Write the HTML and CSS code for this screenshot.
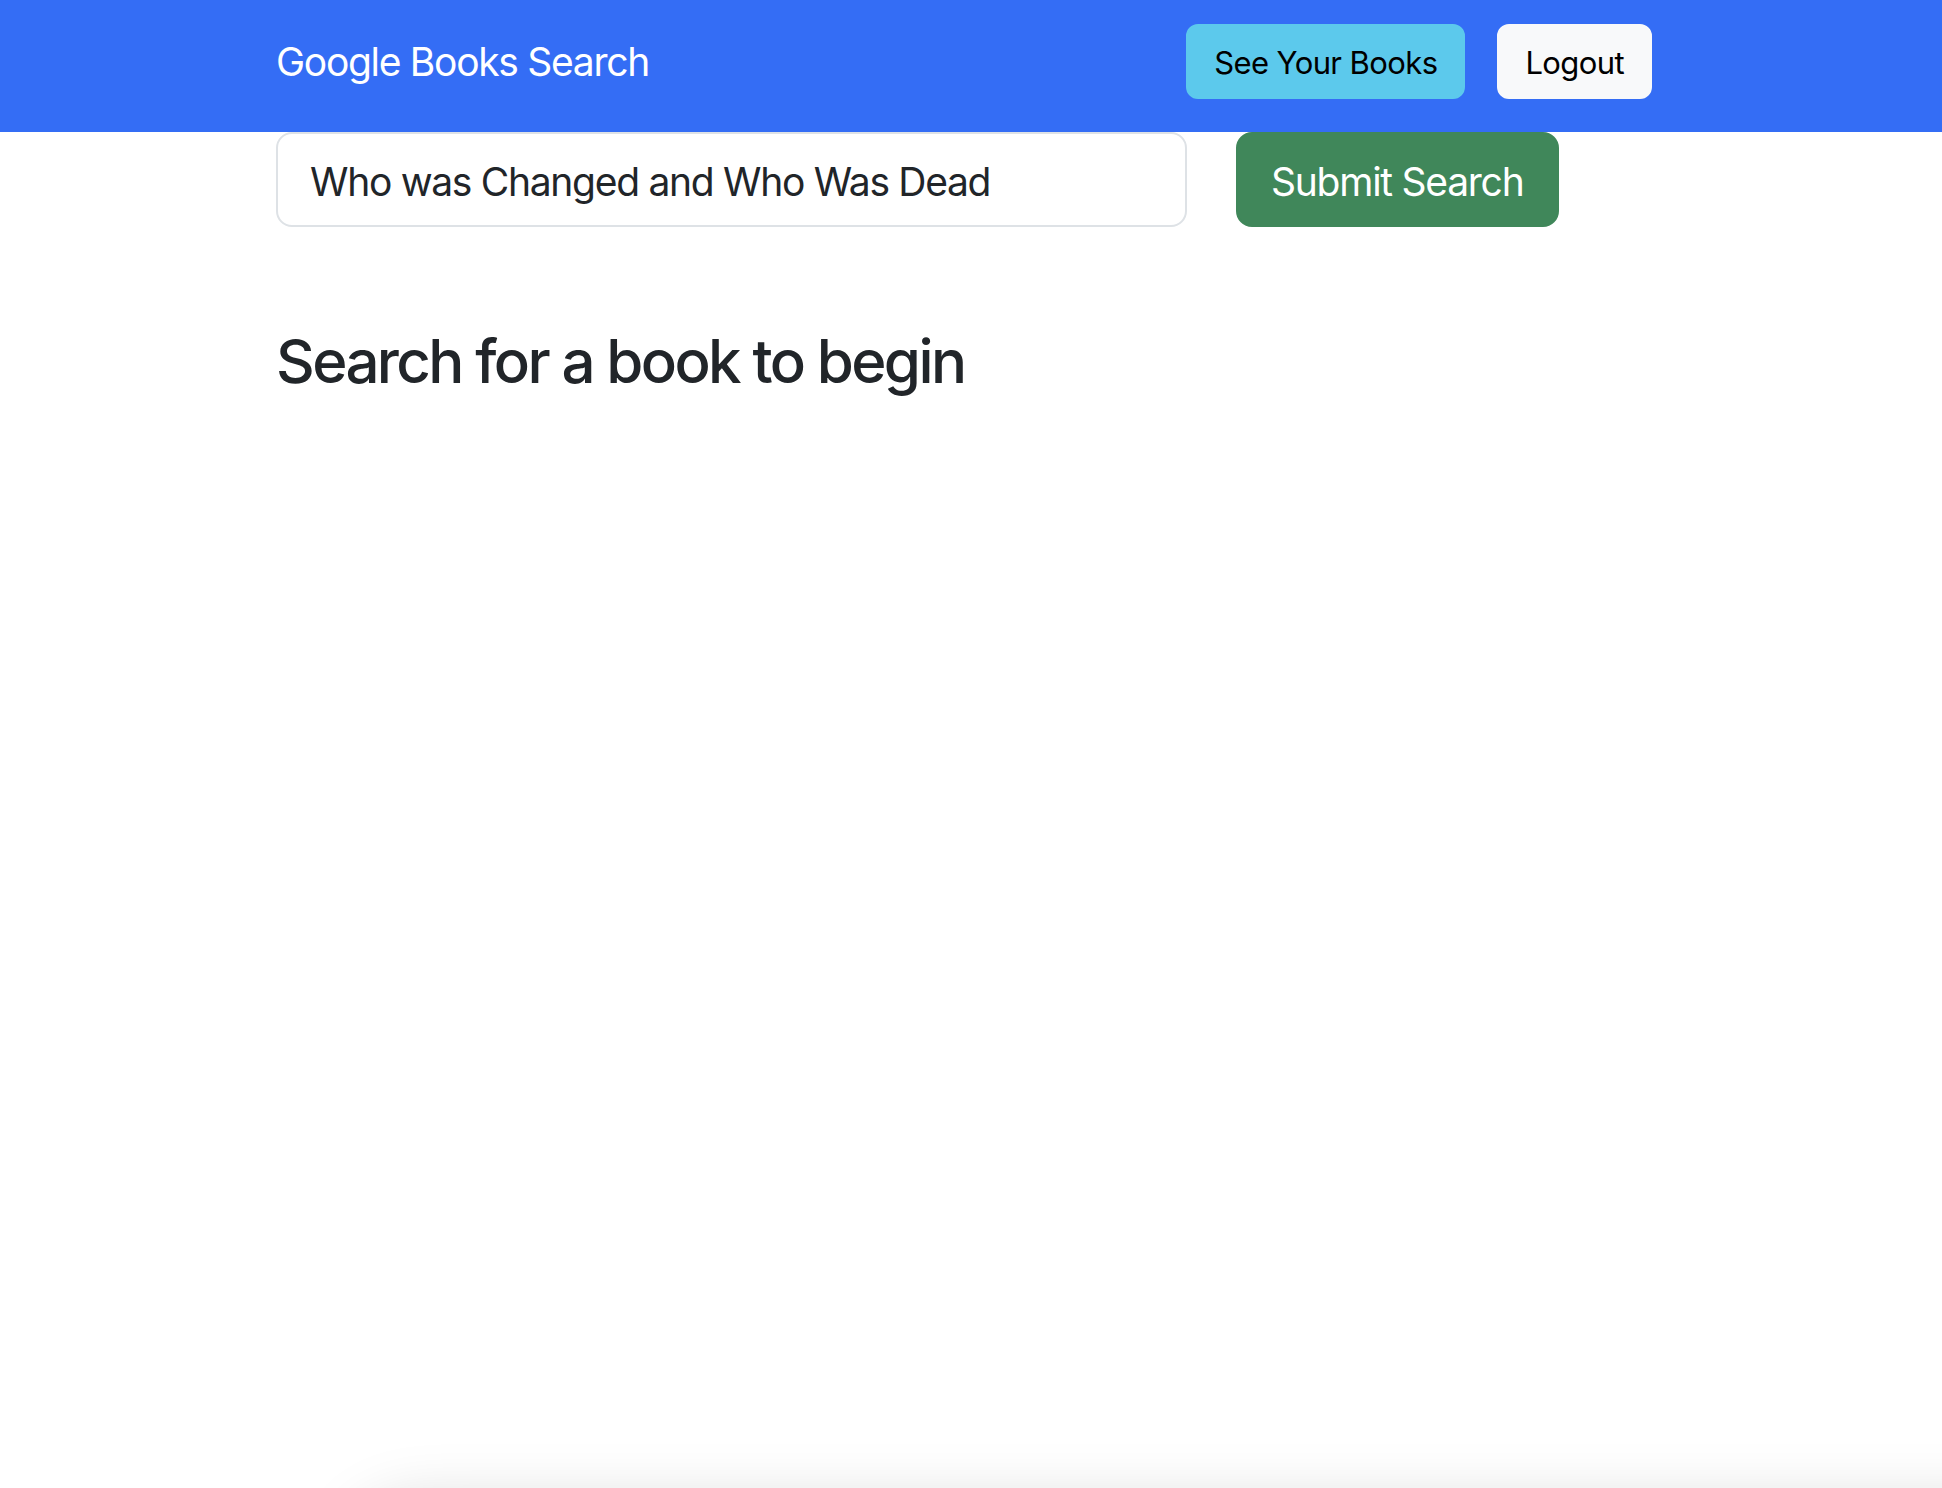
FILE: index.html
```html
<!DOCTYPE html>
<html lang="en">
<head>
<meta charset="utf-8">
<title>Google Books Search</title>
<link rel="stylesheet" href="styles.css">
</head>
<body>
<nav class="navbar">
  <div class="container nav-inner">
    <a class="brand" href="#">Google Books Search</a>
    <div class="nav-actions">
      <button class="btn btn-info" type="button">See Your Books</button>
      <button class="btn btn-light" type="button">Logout</button>
    </div>
  </div>
</nav>
<main class="container">
  <form class="search-form">
    <input class="search-input" type="text" value="Who was Changed and Who Was Dead">
    <button class="btn-lg btn-success" type="button">Submit Search</button>
  </form>
  <h2 class="heading">Search for a book to begin</h2>
</main>
<div class="window-shadow"></div>
</body>
</html>
```

FILE: styles.css
```css
html, body {
  margin: 0;
  padding: 0;
  background: #ffffff;
  height: 100%;
  overflow: hidden;
}

body {
  font-family: Inter, "Noto Sans", "Liberation Sans", sans-serif;
  color: #212529;
}

.container {
  max-width: 1440px;
  margin: 0 auto;
  padding: 0 24px 0 25px;
  box-sizing: border-box;
}

.navbar {
  background: #346df5;
  height: 132px;
}

.nav-inner {
  display: flex;
  align-items: center;
  justify-content: space-between;
  padding-top: 24px;
}

.brand {
  color: #ffffff;
  text-decoration: none;
  font-size: 39px;
  line-height: 60px;
  letter-spacing: -1.3px;
}

.nav-actions {
  display: flex;
  gap: 32px;
  margin-right: 15px;
}

.btn {
  font-family: inherit;
  font-size: 31px;
  line-height: 47px;
  padding: 13px 26px 11px;
  border: 2px solid transparent;
  border-radius: 12px;
  color: #000000;
  cursor: pointer;
  letter-spacing: -0.6px;
}

.btn-info {
  background: #5cc9ec;
  border-color: #5cc9ec;
}

.btn-light {
  background: #f8f9fa;
  border-color: #f8f9fa;
}

.search-form {
  display: flex;
  gap: 49px;
  margin: 0;
}

.search-input {
  width: 911px;
  height: 95px;
  box-sizing: border-box;
  border: 2px solid #dee2e6;
  border-radius: 16px;
  padding: 4px 32px 0;
  font-family: inherit;
  font-size: 39px;
  color: #212529;
  letter-spacing: -1.3px;
  outline: none;
}

.btn-lg {
  height: 95px;
  box-sizing: border-box;
  padding: 4px 34px 0 33px;
  border: 2px solid #40875a;
  border-radius: 16px;
  background: #40875a;
  color: #ffffff;
  font-family: inherit;
  font-size: 39px;
  letter-spacing: -1.25px;
  cursor: pointer;
}

.heading {
  font-size: 60px;
  font-weight: 500;
  line-height: 1.2;
  margin: 98px 0 0;
  letter-spacing: -2.6px;
}

.window-shadow {
  position: fixed;
  left: 340px;
  right: -200px;
  top: 1500px;
  height: 300px;
  border-radius: 80px;
  box-shadow: 0 0 60px 0 rgba(0, 0, 0, 0.15);
  background: #ffffff;
}
```
